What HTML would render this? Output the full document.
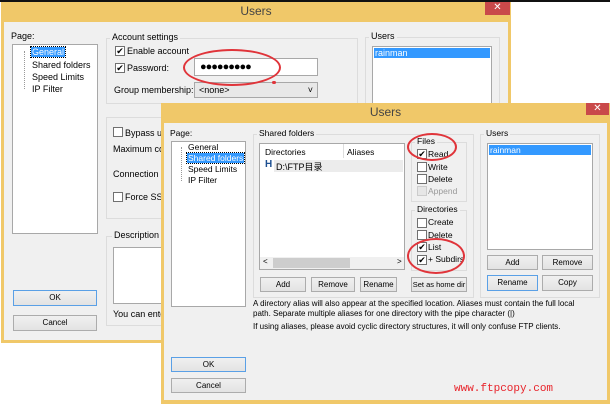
<!DOCTYPE html>
<html><head><meta charset="utf-8"><style>
*{box-sizing:border-box;margin:0;padding:0}
body{width:610px;height:404px;background:#fff;position:relative;overflow:hidden;font-family:"Liberation Sans","Noto Sans CJK SC",sans-serif;font-size:9px;color:#000}
.a{position:absolute}
.win{position:absolute;background:#f0c869}
.cont{position:absolute;background:#f0f0f0}
.title{position:absolute;left:0;right:0;text-align:center;color:#444;font-size:12px}
.close{position:absolute;background:#c9494a;color:#fff;text-align:center;font-size:10px;line-height:12px}
.box{position:absolute;background:#fff;border:1px solid #a8a8a8}
.grp{position:absolute;border:1px solid #dcdcdc}
.gl{position:absolute;background:#f0f0f0;padding:0 2px;top:-7px;left:5px;white-space:nowrap}
.btn{position:absolute;background:linear-gradient(#f0f0f0,#e3e3e3);border:1px solid #acacac;text-align:center;line-height:13px;font-size:8px;white-space:nowrap;overflow:hidden}
.cb{position:absolute;width:10px;height:10px;border:1px solid #707070;background:#fff;font-size:9px;line-height:8px;text-align:center}
.t{position:absolute;white-space:nowrap}
.oval{position:absolute;border:2px solid #e0343a;border-radius:50%}
.sel{background:#3399ff;color:#fff}
</style></head><body>
<div class="a" style="left:0;top:0;width:610px;height:2px;background:#111"></div>
<!-- window 1 -->
<div class="win" style="left:1px;top:2px;width:510px;height:341px">
 <div class="title" style="top:2px">Users</div>
 <div class="close" style="left:484px;top:0;width:25px;height:13px">✕</div>
 <div class="cont" style="left:3px;top:20px;width:504px;height:318px"></div>
</div>
<div class="t" style="left:11px;top:31px">Page:</div>
<div class="box" style="left:12px;top:44px;width:86px;height:190px"></div>
<div class="a" style="left:24px;top:51px;width:1px;height:38px;border-left:1px dotted #999"></div>
<div class="t sel" style="left:31px;top:47px;outline:1px dotted #000;padding:0 1px">General</div>
<div class="t" style="left:32px;top:60px">Shared folders</div>
<div class="t" style="left:32px;top:72px">Speed Limits</div>
<div class="t" style="left:32px;top:84px">IP Filter</div>
<div class="btn" style="left:13px;top:290px;width:84px;height:16px;border-color:#5aa0e6">OK</div>
<div class="btn" style="left:13px;top:315px;width:84px;height:16px">Cancel</div>
<div class="grp" style="left:106px;top:38px;width:252px;height:66px"><span class="gl" style="left:3px">Account settings</span></div>
<div class="cb" style="left:115px;top:46px">✔</div><div class="t" style="left:127px;top:46px">Enable account</div>
<div class="cb" style="left:115px;top:63px">✔</div><div class="t" style="left:127px;top:63px">Password:</div>
<div class="box" style="left:194px;top:58px;width:124px;height:18px;padding:2px 5px;font-size:11px;letter-spacing:-1px">●●●●●●●●●</div>
<div class="t" style="left:114px;top:85px">Group membership:</div>
<div class="box" style="left:194px;top:82px;width:124px;height:16px;background:#e8e8e8;padding:2px 4px">&lt;none&gt;<span style="position:absolute;right:4px">˅</span></div>
<div class="oval" style="left:183px;top:49px;width:98px;height:37px"></div>
<div class="a" style="left:272px;top:81px;width:4px;height:3px;background:#e0343a;border-radius:2px"></div>
<div class="grp" style="left:106px;top:117px;width:60px;height:102px"></div>
<div class="cb" style="left:113px;top:127px"></div><div class="t" style="left:125px;top:128px">Bypass us</div>
<div class="t" style="left:113px;top:144px">Maximum cor</div>
<div class="t" style="left:113px;top:169px">Connection li</div>
<div class="cb" style="left:113px;top:192px"></div><div class="t" style="left:125px;top:192px">Force SSL</div>
<div class="grp" style="left:106px;top:236px;width:60px;height:90px"><span class="gl" style="left:5px">Description</span></div>
<div class="box" style="left:113px;top:247px;width:52px;height:57px;border-right:none"></div>
<div class="t" style="left:113px;top:309px">You can ente</div>
<div class="grp" style="left:365px;top:37px;width:135px;height:70px"><span class="gl" style="left:3px">Users</span></div>
<div class="box" style="left:372px;top:46px;width:120px;height:70px"><div class="sel" style="margin:1px;padding-left:1px;font-size:9px">rainman</div></div>
<!-- window 2 -->
<div class="win" style="left:161px;top:103px;width:449px;height:301px">
 <div class="title" style="top:2px">Users</div>
 <div class="close" style="left:425px;top:0;width:23px;height:12px">✕</div>
 <div class="cont" style="left:3px;top:20px;width:443px;height:277px"></div>
</div>
<div class="t" style="left:170px;top:128px;font-size:8.5px">Page:</div>
<div class="box" style="left:171px;top:141px;width:75px;height:166px"></div>
<div class="a" style="left:181px;top:147px;width:1px;height:34px;border-left:1px dotted #999"></div>
<div class="t" style="left:188px;top:142px;font-size:8.5px">General</div>
<div class="t sel" style="left:187px;top:153px;font-size:8.5px;outline:1px dotted #000;padding:0 1px">Shared folders</div>
<div class="t" style="left:188px;top:164px;font-size:8.5px">Speed Limits</div>
<div class="t" style="left:188px;top:175px;font-size:8.5px">IP Filter</div>
<div class="btn" style="left:171px;top:357px;width:75px;height:15px;border-color:#5aa0e6">OK</div>
<div class="btn" style="left:171px;top:378px;width:75px;height:15px">Cancel</div>
<div class="grp" style="left:253px;top:134px;width:221px;height:164px"><span class="gl" style="left:3px;font-size:8.5px">Shared folders</span></div>
<div class="box" style="left:259px;top:143px;width:146px;height:127px"></div>
<div class="t" style="left:265px;top:147px;font-size:8.5px">Directories</div>
<div class="a" style="left:343px;top:144px;width:1px;height:14px;background:#ddd"></div>
<div class="t" style="left:347px;top:147px;font-size:8.5px">Aliases</div>
<div class="a" style="left:274px;top:160px;width:129px;height:12px;background:#ececec"></div>
<div class="t" style="left:265px;top:159px;font-size:10px;color:#1d4f91;font-weight:bold">H</div>
<div class="t" style="left:276px;top:160px;font-size:9px">D:\FTP目录</div>
<div class="a" style="left:260px;top:257px;width:144px;height:12px;background:#f0f0f0"></div>
<div class="a" style="left:273px;top:258px;width:77px;height:10px;background:#cdcdcd"></div>
<div class="t" style="left:263px;top:257px;font-size:8px">&lt;</div><div class="t" style="left:397px;top:257px;font-size:8px">&gt;</div>
<div class="grp" style="left:411px;top:142px;width:56px;height:60px"><span class="gl" style="left:3px;font-size:8.5px">Files</span></div>
<div class="cb" style="left:417px;top:149px">✔</div><div class="t" style="left:428px;top:149px;font-size:8.5px">Read</div>
<div class="cb" style="left:417px;top:162px"></div><div class="t" style="left:428px;top:162px;font-size:8.5px">Write</div>
<div class="cb" style="left:417px;top:174px"></div><div class="t" style="left:428px;top:174px;font-size:8.5px">Delete</div>
<div class="cb" style="left:417px;top:186px;border-color:#ccc;background:#e6e6e6"></div><div class="t" style="left:428px;top:186px;font-size:8.5px;color:#999">Append</div>
<div class="grp" style="left:411px;top:210px;width:56px;height:61px"><span class="gl" style="left:3px;font-size:8.5px">Directories</span></div>
<div class="cb" style="left:417px;top:218px"></div><div class="t" style="left:428px;top:217px;font-size:8.5px">Create</div>
<div class="cb" style="left:417px;top:230px"></div><div class="t" style="left:428px;top:230px;font-size:8.5px">Delete</div>
<div class="cb" style="left:417px;top:242px">✔</div><div class="t" style="left:428px;top:242px;font-size:8.5px">List</div>
<div class="cb" style="left:417px;top:255px">✔</div><div class="t" style="left:428px;top:254px;font-size:8.5px">+ Subdirs</div>
<div class="oval" style="left:407px;top:133px;width:50px;height:28px"></div>
<div class="oval" style="left:407px;top:238px;width:58px;height:36px"></div>
<div class="btn" style="left:260px;top:277px;width:46px;height:15px">Add</div>
<div class="btn" style="left:311px;top:277px;width:44px;height:15px">Remove</div>
<div class="btn" style="left:360px;top:277px;width:37px;height:15px">Rename</div>
<div class="btn" style="left:411px;top:277px;width:56px;height:15px;font-size:7.5px">Set as home dir</div>
<div class="grp" style="left:480px;top:134px;width:120px;height:164px"><span class="gl" style="left:3px;font-size:8.5px">Users</span></div>
<div class="box" style="left:487px;top:143px;width:106px;height:107px"><div class="sel" style="margin:1px;padding-left:1px;font-size:8.5px">rainman</div></div>
<div class="btn" style="left:487px;top:255px;width:51px;height:15px">Add</div>
<div class="btn" style="left:542px;top:255px;width:51px;height:15px">Remove</div>
<div class="btn" style="left:487px;top:275px;width:51px;height:16px;border-color:#5aa0e6">Rename</div>
<div class="btn" style="left:542px;top:275px;width:51px;height:16px">Copy</div>
<div class="t" style="left:253px;top:299px;font-size:8px;line-height:9.5px">A directory alias will also appear at the specified location. Aliases must contain the full local<br>path. Separate multiple aliases for one directory with the pipe character (|)</div>
<div class="t" style="left:253px;top:322px;font-size:8px">If using aliases, please avoid cyclic directory structures, it will only confuse FTP clients.</div>
<div class="t" style="left:454px;top:383px;font-family:'Liberation Mono',monospace;font-size:11px;color:#e8232a">www.ftpcopy.com</div>
</body></html>
